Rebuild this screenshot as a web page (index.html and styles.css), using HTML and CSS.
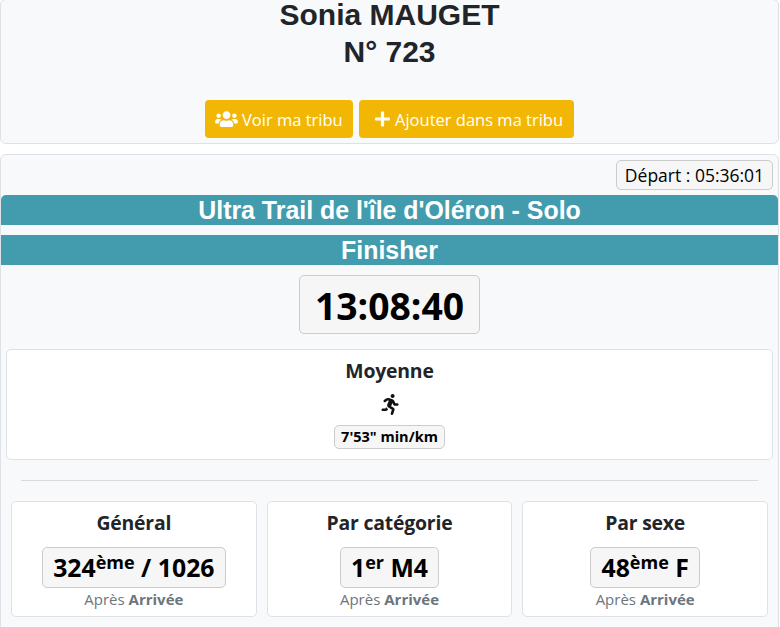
FILE: index.html
```html
<!DOCTYPE html>
<html lang="fr">
<head>
<meta charset="utf-8">
<title>Sonia MAUGET</title>
<link rel="stylesheet" href="styles.css">
</head>
<body>
<section class="card head-card">
  <h1 class="name"><span class="name-line">Sonia MAUGET</span><span class="bib-line">N° 723</span></h1>
  <div class="actions">
    <a class="btn btn-users"><svg class="ico-users" viewBox="0 0 640 512"><path fill="currentColor" d="M96 224c35.300 0 64-28.700 64-64s-28.700-64-64-64-64 28.700-64 64 28.700 64 64 64zm448 0c35.300 0 64-28.700 64-64s-28.700-64-64-64-64 28.700-64 64 28.700 64 64 64zm32 32h-64c-17.600 0-33.500 7.100-45.100 18.600 40.300 22.100 68.900 62 75.100 109.400h66c17.700 0 32-14.300 32-32v-32c0-35.300-28.700-64-64-64zm-256 0c61.900 0 112-50.100 112-112S381.900 32 320 32 208 82.100 208 144s50.100 112 112 112zm76.800 32h-8.300c-20.800 10-43.900 16-68.500 16s-47.600-6-68.500-16h-8.300C179.600 288 128 339.600 128 403.200V432c0 26.500 21.500 48 48 48h288c26.500 0 48-21.500 48-48v-28.800c0-63.600-51.600-115.200-115.200-115.200zm-223.700-13.400C161.500 263.100 145.600 256 128 256H64c-35.300 0-64 28.700-64 64v32c0 17.700 14.300 32 32 32h65.900c6.300-47.400 34.900-87.300 75.200-109.400z"/></svg>Voir ma tribu</a>
    <a class="btn btn-plus"><svg class="ico-plus" viewBox="0 0 448 512"><path fill="currentColor" d="M416 208H272V64c0-17.700-14.300-32-32-32h-32c-17.700 0-32 14.300-32 32v144H32c-17.700 0-32 14.300-32 32v32c0 17.700 14.300 32 32 32h144v144c0 17.700 14.300 32 32 32h32c17.700 0 32-14.300 32-32V304h144c17.700 0 32-14.300 32-32v-32c0-17.700-14.300-32-32-32z"/></svg>Ajouter dans ma tribu</a>
  </div>
</section>
<section class="card main-card">
  <div class="depart-row"><span class="chip depart">Départ : 05:36:01</span></div>
  <div class="band band-first">Ultra Trail de l'île d'Oléron - Solo</div>
  <div class="band band-second">Finisher</div>
  <div class="time-row"><span class="chip time">13:08:40</span></div>
  <div class="panel avg">
    <h2 class="panel-title">Moyenne</h2>
    <svg class="ico-run" viewBox="0 0 416 512"><path fill="currentColor" d="M272 96c26.500 0 48-21.500 48-48S298.500 0 272 0s-48 21.500-48 48 21.500 48 48 48zM113.700 317.500l-14.800 34.500H32c-17.700 0-32 14.300-32 32s14.300 32 32 32h77.400c19.200 0 36.500-11.400 44.100-29.100l8.800-20.500-10.700-6.300c-17.300-10.200-30.400-25.300-37.900-42.600zM384 223.800h-44l-26-53.200c-12.500-25.500-35.500-44.200-61.800-50.900l-71.100-21.200c-28.300-6.800-57.800-.5-80.900 17.100L60.500 145c-14 10.800-16.700 30.800-6 44.900 10.800 14 30.800 16.700 44.900 5.900l39.700-30.400c7.700-5.900 17.400-8 25.700-6l14.700 4.400-37.500 87.500c-12.600 29.500-1.300 64 26.400 80.300l85 50.200-27.500 87.700c-5.300 16.900 4.100 34.800 21 40.100 3.200 1 6.400 1.500 9.600 1.500 13.600 0 26.300-8.800 30.500-22.400l31.600-101c5.900-20.800-2.900-43.100-21.600-54.400l-61.300-36.100 31.300-78.300 20.300 41.500c8 16.300 24.800 26.800 42.900 26.800H384c17.700 0 32-14.300 32-32s-14.300-32-32-32z"/></svg>
    <div class="avg-chip-row"><span class="chip pace">7'53" min/km</span></div>
  </div>
  <hr class="rule">
  <div class="ranks">
    <div class="panel rank">
      <h2 class="panel-title">Général</h2>
      <span class="chip rank-chip">324<sup>ème</sup> / 1026</span>
      <p class="after">Après <b>Arrivée</b></p>
    </div>
    <div class="panel rank">
      <h2 class="panel-title">Par catégorie</h2>
      <span class="chip rank-chip">1<sup>er</sup> M4</span>
      <p class="after">Après <b>Arrivée</b></p>
    </div>
    <div class="panel rank">
      <h2 class="panel-title">Par sexe</h2>
      <span class="chip rank-chip">48<sup>ème</sup> F</span>
      <p class="after">Après <b>Arrivée</b></p>
    </div>
  </div>
</section>
</body>
</html>
```
FILE: styles.css
```css
* { box-sizing: border-box; }
html, body { margin: 0; padding: 0; height: 627px; overflow: hidden; }
body {
  background: #fff;
  color: #212529;
  font-family: "Open Sans", "Noto Sans", sans-serif;
  font-size: 16px;
  width: 780px;
}
.card {
  background: #f8f9fa;
  border: 1px solid #dee2e6;
  border-radius: 6px;
  width: 779px;
}
.head-card {
  height: 145px;
  margin-top: -1px;
  text-align: center;
}
.name {
  margin: 0;
  font: bold 30px "Liberation Sans", Arial, sans-serif;
  color: #212529;
}
.name-line { display: block; line-height: 30px; }
.bib-line { display: block; line-height: 44px; }
.actions {
  display: flex;
  justify-content: center;
  gap: 6px;
  margin-top: 26px;
}
.btn {
  display: inline-flex;
  align-items: center;
  height: 38px;
  background: #f2b705;
  color: #fff;
  border-radius: 4px;
  font-size: 16.5px;
  white-space: pre;
}
.btn-users { width: 148px; padding-left: 10px; gap: 4px; }
.btn-plus { width: 215px; padding-left: 16px; gap: 5px; }
.ico-users { width: 23px; height: 18px; flex: none; }
.ico-plus { width: 15px; height: 18px; flex: none; }
.main-card {
  margin-top: 10px;
  height: 480px;
}
.depart-row {
  display: flex;
  justify-content: flex-end;
  padding: 5px 5px 0 0;
}
.chip {
  display: inline-block;
  background: #f6f6f6;
  border: 1px solid #ccc;
  border-radius: 5px;
  color: #000;
  white-space: nowrap;
}
.depart {
  width: 157px;
  height: 30px;
  line-height: 28px;
  font-size: 17.5px;
  text-align: center;
}
.band {
  background: #439cae;
  color: #fff;
  font: bold 24.9px/30px "Liberation Sans", Arial, sans-serif;
  text-align: center;
  height: 30px;
}
.band-first { margin-top: 5px; border-radius: 5px 5px 0 0; }
.band-second { margin-top: 10px; }
.time-row {
  display: flex;
  justify-content: center;
  margin-top: 10px;
}
.time {
  width: 181px;
  height: 59px;
  line-height: 59px;
  font-size: 37.3px;
  font-weight: 700;
  text-align: center;
}
.panel {
  background: #fff;
  border: 1px solid #dee2e6;
  border-radius: 5px;
  text-align: center;
}
.avg {
  margin: 15px 5px 0;
  height: 111px;
  padding-top: 8px;
}
.panel-title {
  margin: 0;
  font-size: 19.4px;
  line-height: 26px;
  font-weight: 700;
  letter-spacing: -0.2px;
  color: #212529;
}
.ico-run {
  display: block;
  margin: 10px auto 0;
  width: 18px;
  height: 21px;
  color: #111;
}
.avg-chip-row { margin-top: 10px; }
.pace {
  height: 24px;
  line-height: 22px;
  font-size: 14.5px;
  font-weight: 700;
  padding: 0 6px;
}
.rule {
  margin: 20px 20px 0;
  border: 0;
  border-top: 1px solid #d9dadb;
}
.ranks {
  display: grid;
  grid-template-columns: repeat(3, 1fr);
  gap: 10px;
  margin: 20px 10px 0;
}
.rank {
  height: 116px;
  padding-top: 8px;
}
.rank-chip {
  margin-top: 11px;
  height: 41px;
  line-height: 39px;
  font-size: 24.8px;
  font-weight: 700;
  padding: 0 10px;
}
.rank-chip sup {
  font-size: 18px;
  line-height: 0;
  vertical-align: baseline;
  position: relative;
  top: -8px;
}
.after {
  margin: 2px 0 0;
  font-size: 15px;
  line-height: 19px;
  color: #6c757d;
}
```
